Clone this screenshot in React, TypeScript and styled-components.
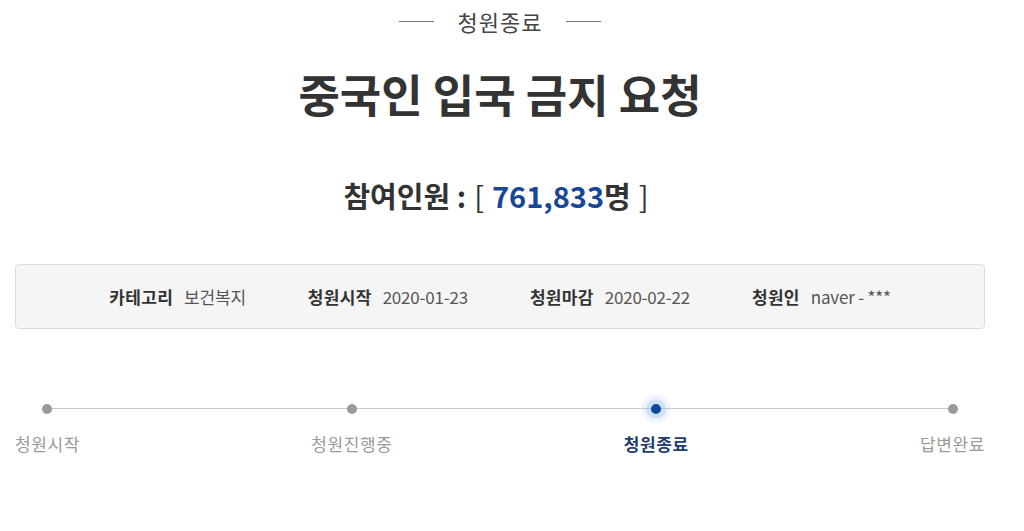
import styled, { createGlobalStyle } from 'styled-components';

const GlobalStyle = createGlobalStyle`
  html, body {
    margin: 0;
    padding: 0;
    background: #ffffff;
  }
  body {
    font-family: 'Noto Sans CJK KR', 'Noto Sans', sans-serif;
    color: #333;
  }
`;

const Page = styled.div`
  width: 970px;
  margin: 0 0 0 15px;
`;

const StatusHead = styled.div`
  height: 42px;
  display: flex;
  align-items: center;
  justify-content: center;
  gap: 24px;
  font-size: 22px;
  letter-spacing: 1px;
  color: #444;
`;

const HeadLine = styled.span`
  width: 35px;
  height: 1px;
  background: #777;
`;

const Title = styled.h1`
  margin: 26px 0 0;
  font-size: 45px;
  line-height: 52px;
  font-weight: 700;
  text-align: center;
  color: #333;
`;

const Count = styled.div`
  margin-top: 57px;
  height: 36px;
  display: flex;
  justify-content: center;
  align-items: center;
  font-size: 29px;
  font-weight: 700;
  color: #333;
`;

const Bracket = styled.span`
  font-weight: 400;
  margin: 0 8px;
`;

const Number = styled.span`
  color: #174795;
`;

const InfoBox = styled.div`
  margin-top: 51px;
  height: 63px;
  border: 1px solid #dcdcdc;
  border-radius: 4px;
  background: #f5f5f5;
  display: flex;
  justify-content: center;
  align-items: center;
  gap: 62px;
  font-size: 17px;
`;

const InfoItem = styled.div`
  display: flex;
  align-items: center;
  gap: 11px;
`;

const InfoLabel = styled.span`
  font-weight: 700;
  color: #333;
  letter-spacing: 0.3px;
`;

const InfoValue = styled.span`
  color: #555;
  letter-spacing: -0.2px;
`;

const Steps = styled.div`
  position: relative;
  margin-top: 67px;
  display: flex;
  justify-content: space-between;
`;

const Track = styled.div`
  position: absolute;
  top: 12px;
  left: 32px;
  right: 32px;
  height: 1px;
  background: #c8c8c8;
`;

const Step = styled.div`
  position: relative;
  display: flex;
  flex-direction: column;
  align-items: center;
`;

const DotArea = styled.div`
  height: 26px;
  width: 26px;
  display: flex;
  align-items: center;
  justify-content: center;
`;

const Dot = styled.span<{ $active?: boolean }>`
  width: 10px;
  height: 10px;
  border-radius: 50%;
  background: ${(p) => (p.$active ? '#0c4a9e' : '#9a9a9a')};
  box-shadow: ${(p) =>
    p.$active ? '0 0 0 5px rgba(120, 170, 235, 0.25), 0 0 0 9px rgba(150, 190, 240, 0.15)' : 'none'};
`;

const StepLabel = styled.span<{ $active?: boolean }>`
  margin-top: 10px;
  font-size: 17px;
  letter-spacing: 0.6px;
  line-height: 24px;
  color: ${(p) => (p.$active ? '#1f3d6e' : '#9a9a9a')};
  font-weight: ${(p) => (p.$active ? 700 : 400)};
`;

const info = [
  { label: '카테고리', value: '보건복지' },
  { label: '청원시작', value: '2020-01-23' },
  { label: '청원마감', value: '2020-02-22' },
  { label: '청원인', value: 'naver - ***' },
];

const steps = ['청원시작', '청원진행중', '청원종료', '답변완료'];
const activeStep = 2;

export default function App() {
  return (
    <Page>
      <GlobalStyle />
      <StatusHead>
        <HeadLine />
        <span>청원종료</span>
        <HeadLine />
      </StatusHead>
      <Title>중국인 입국 금지 요청</Title>
      <Count>
        참여인원 :<Bracket>[</Bracket>
        <Number>761,833</Number>명<Bracket>]</Bracket>
      </Count>
      <InfoBox>
        {info.map((item) => (
          <InfoItem key={item.label}>
            <InfoLabel>{item.label}</InfoLabel>
            <InfoValue>{item.value}</InfoValue>
          </InfoItem>
        ))}
      </InfoBox>
      <Steps>
        <Track />
        {steps.map((s, i) => (
          <Step key={s}>
            <DotArea>
              <Dot $active={i === activeStep} />
            </DotArea>
            <StepLabel $active={i === activeStep}>{s}</StepLabel>
          </Step>
        ))}
      </Steps>
    </Page>
  );
}
